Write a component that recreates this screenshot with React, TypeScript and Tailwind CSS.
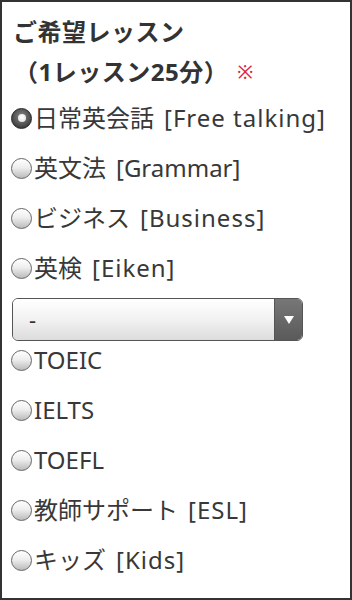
import React from "react";

const font = { fontFamily: '"Noto Sans", "Noto Sans CJK JP", sans-serif' };

function Radio({ checked }: { checked?: boolean }) {
  if (checked) {
    return (
      <span className="inline-flex h-[21px] w-[21px] shrink-0 items-center justify-center rounded-full border border-[#222] bg-[radial-gradient(circle_at_50%_40%,#888_0%,#444_70%,#222_100%)]">
        <span className="h-[8px] w-[8px] rounded-full bg-[radial-gradient(circle_at_50%_40%,#fff_0%,#ddd_100%)]" />
      </span>
    );
  }
  return (
    <span className="inline-block h-[21px] w-[21px] shrink-0 rounded-full border border-[#666] bg-[linear-gradient(180deg,#ffffff_0%,#eeeeee_45%,#bbbbbb_100%)]" />
  );
}

function Option({
  jp,
  en,
  checked,
  wide = true,
}: {
  jp?: string;
  en: string;
  checked?: boolean;
  wide?: boolean;
}) {
  return (
    <label className="flex h-[30px] items-center text-[24px] leading-[30px] text-[#383838]">
      <Radio checked={checked} />
      <span className="ml-[2px] whitespace-nowrap">
        {jp && <span className="mr-[10px]">{jp}</span>}
        <span className={wide ? "tracking-[1px]" : ""}>{en}</span>
      </span>
    </label>
  );
}

export default function App() {
  return (
    <div
      className="box-border h-[600px] w-[352px] overflow-hidden border-2 border-[#333] bg-white pl-[9px] pt-[10px]"
      style={font}
    >
      <div className="text-[24px] font-bold leading-[40px] tracking-[0.5px] text-[#333]">
        <div className="pl-[2px]">ご希望レッスン</div>
        <div className="flex items-center">
          <span className="pl-[3px]">（1レッスン25分）</span>
          <span className="ml-[9px] text-[19px] font-normal text-[#e0223c]">※</span>
        </div>
      </div>
      <div className="mt-[11px] flex flex-col gap-[20px]">
        <Option jp="日常英会話" en="[Free talking]" checked />
        <Option jp="英文法" en="[Grammar]" wide={false} />
        <Option jp="ビジネス" en="[Business]" />
        <Option jp="英検" en="[Eiken]" />
      </div>
      <div className="mb-[4px] ml-[1px] mt-[15px] flex h-[43px] w-[291px] overflow-hidden rounded-[6px] border border-[#555]">
        <div className="flex flex-1 items-center bg-[linear-gradient(180deg,#ffffff_0%,#f2f2f2_50%,#dcdcdc_100%)] pl-[16px] text-[22px] text-[#333]">
          -
        </div>
        <div className="flex w-[28px] items-center justify-center border-l border-[#555] bg-[linear-gradient(180deg,#777_0%,#5a5a5a_100%)]">
          <span className="block h-0 w-0 border-l-[5px] border-r-[5px] border-t-[8px] border-l-transparent border-r-transparent border-t-white" />
        </div>
      </div>
      <div className="flex flex-col gap-[20px]">
        <Option en="TOEIC" wide={false} />
        <Option en="IELTS" wide={false} />
        <Option en="TOEFL" wide={false} />
        <Option jp="教師サポート" en="[ESL]" />
        <Option jp="キッズ" en="[Kids]" />
      </div>
    </div>
  );
}
